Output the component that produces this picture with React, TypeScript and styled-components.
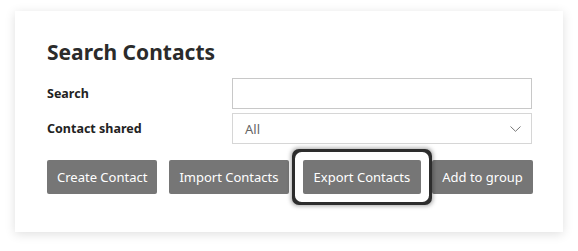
import React, { useState } from "react";
import styled, { createGlobalStyle } from "styled-components";

const GlobalStyle = createGlobalStyle`
  html, body {
    margin: 0;
    padding: 0;
    background: #ffffff;
    font-family: "Noto Sans", "Open Sans", sans-serif;
  }
`;

const Page = styled.div`
  padding: 11px 15px 19px 15px;
`;

const Card = styled.section`
  width: 548px;
  height: 221px;
  box-sizing: border-box;
  background: #fff;
  padding: 25px 32px 0 32px;
  box-shadow: 0 2px 10px rgba(0, 0, 0, 0.13);
`;

const Title = styled.h2`
  margin: 0 0 10px 0;
  font-size: 21px;
  line-height: 32px;
  font-weight: 700;
  color: #2b2b2b;
`;

const Form = styled.form`
  display: grid;
  grid-template-columns: 185px 300px;
  row-gap: 4px;
  align-items: center;
`;

const Label = styled.label`
  font-size: 12.5px;
  font-weight: 700;
  color: #222;
`;

const Field = styled.input`
  box-sizing: border-box;
  height: 31px;
  width: 300px;
  border: 1px solid #c8c8c8;
  padding: 0 12px;
  font: inherit;
  font-size: 13px;
  outline: none;
`;

const SelectBox = styled.div`
  box-sizing: border-box;
  height: 31px;
  width: 300px;
  border: 1px solid #d6d6d6;
  display: flex;
  align-items: center;
  justify-content: space-between;
  padding: 0 10px 0 12px;
  font-size: 13px;
  color: #666;
`;

const Actions = styled.div`
  display: flex;
  gap: 12px;
  margin-top: 16px;
`;

const Button = styled.button<{ $focused?: boolean }>`
  flex-shrink: 0;
  white-space: nowrap;
  height: 34px;
  padding: 0 ${(p) => (p.$focused ? "11px" : "10px")};
  border: none;
  border-radius: 2px;
  background: #767676;
  color: #fff;
  font-family: inherit;
  font-size: 13px;
  cursor: pointer;
  position: relative;
  box-shadow: ${(p) =>
    p.$focused
      ? "0 0 0 8px #fff, 0 0 0 11px #2d2d2d, 0 0 4px 12px rgba(0,0,0,0.35)"
      : "none"};
  z-index: ${(p) => (p.$focused ? 1 : 0)};
  margin: ${(p) => (p.$focused ? "0 -1px 0 2px" : "0")};
`;

const Chevron = () => (
  <svg width="11" height="6" viewBox="0 0 11 6" fill="none">
    <path d="M0.5 0.5 L5.5 5.3 L10.5 0.5" stroke="#777" strokeWidth="1" />
  </svg>
);

const App: React.FC = () => {
  const [search, setSearch] = useState("");

  return (
    <>
      <GlobalStyle />
      <Page>
        <Card>
          <Title>Search Contacts</Title>
          <Form onSubmit={(e) => e.preventDefault()}>
            <Label htmlFor="search">Search</Label>
            <Field
              id="search"
              value={search}
              onChange={(e) => setSearch(e.target.value)}
            />
            <Label>Contact shared</Label>
            <SelectBox>
              <span>All</span>
              <Chevron />
            </SelectBox>
          </Form>
          <Actions>
            <Button>Create Contact</Button>
            <Button>Import Contacts</Button>
            <Button $focused>Export Contacts</Button>
            <Button>Add to group</Button>
          </Actions>
        </Card>
      </Page>
    </>
  );
};

export default App;
